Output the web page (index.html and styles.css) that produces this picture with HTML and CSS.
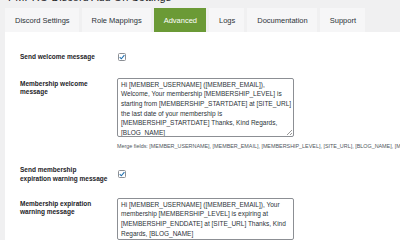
FILE: index.html
```html
<!DOCTYPE html>
<html lang="en">
<head>
<meta charset="utf-8">
<title>Advanced settings</title>
<link rel="stylesheet" href="styles.css">
</head>
<body>
<div class="wrap">
  <h1 class="title">PMPRO Discord Add On Settings</h1>
  <nav class="tabs">
    <span class="tab">Discord Settings</span>
    <span class="tab">Role Mappings</span>
    <span class="tab active">Advanced</span>
    <span class="tab">Logs</span>
    <span class="tab">Documentation</span>
    <span class="tab">Support</span>
  </nav>
  <div class="panel">
    <div class="row row-check">
      <div class="label">Send welcome message</div>
      <div class="field">
        <span class="checkbox"><svg viewBox="0 0 8 8" width="8" height="8"><path d="M1.7 4.2 L3.3 5.8 L6.4 2.1" fill="none" stroke="#2271b1" stroke-width="1.1"/></svg></span>
      </div>
    </div>
    <div class="row row-text">
      <div class="label">Membership welcome<br>message</div>
      <div class="field">
        <div class="textarea tall">
          <span class="line">Hi [MEMBER_USERNAME] ([MEMBER_EMAIL]),</span>
          <span class="line">Welcome, Your membership [MEMBERSHIP_LEVEL] is</span>
          <span class="line">starting from [MEMBERSHIP_STARTDATE] at [SITE_URL]</span>
          <span class="line">the last date of your membership is</span>
          <span class="line">[MEMBERSHIP_STARTDATE] Thanks, Kind Regards,</span>
          <span class="line">[BLOG_NAME]</span>
          <span class="grip"></span>
        </div>
        <p class="merge">Merge fields: [MEMBER_USERNAME], [MEMBER_EMAIL], [MEMBERSHIP_LEVEL], [SITE_URL], [BLOG_NAME], [MEMBERSHIP_STARTDATE], [MEMBERSHIP_ENDDATE]</p>
      </div>
    </div>
    <div class="row row-check row-tight">
      <div class="label">Send membership<br>expiration warning message</div>
      <div class="field">
        <span class="checkbox"><svg viewBox="0 0 8 8" width="8" height="8"><path d="M1.7 4.2 L3.3 5.8 L6.4 2.1" fill="none" stroke="#2271b1" stroke-width="1.1"/></svg></span>
      </div>
    </div>
    <div class="row row-text">
      <div class="label">Membership expiration<br>warning message</div>
      <div class="field">
        <div class="textarea">
          <span class="line">Hi [MEMBER_USERNAME] ([MEMBER_EMAIL]), Your</span>
          <span class="line">membership [MEMBERSHIP_LEVEL] is expiring at</span>
          <span class="line">[MEMBERSHIP_ENDDATE] at [SITE_URL] Thanks, Kind</span>
          <span class="line">Regards, [BLOG_NAME]</span>
        </div>
      </div>
    </div>
  </div>
</div>
</body>
</html>
```

FILE: styles.css
```css
* { box-sizing: border-box; }

html, body {
  margin: 0;
  padding: 0;
  background: #f0f0f1;
  font-family: "Liberation Sans", Arial, sans-serif;
  color: #1d2327;
  overflow: hidden;
  width: 400px;
  height: 240px;
}

.wrap {
  padding-left: 5px;
}

.title {
  margin: -9px 0 0 3px;
  height: 12px;
  font-size: 11px;
  line-height: 12px;
  font-weight: 400;
  color: #1d2327;
  white-space: nowrap;
}

.tabs {
  display: flex;
  gap: 3px;
  margin-top: 5px;
  height: 24px;
}

.tab {
  display: flex;
  align-items: center;
  padding: 0 9px 0 10px;
  background: #f6f6f7;
  font-size: 7.5px;
  color: #2c3338;
  white-space: nowrap;
}

.tab.active {
  background: #6b9a36;
  color: #ffffff;
}

.panel {
  background: #ffffff;
  padding-top: 12px;
  height: 220px;
  overflow: hidden;
}

.row {
  display: flex;
}

.label {
  width: 112px;
  flex: none;
  padding: 9px 0 9px 15px;
  font-size: 6.5px;
  line-height: 8.5px;
  font-weight: 700;
  white-space: nowrap;
  color: #1d2327;
}

.row-tight .label {
  padding-bottom: 7.5px;
}

.row-check {
  align-items: center;
}

.row-text .field {
  padding: 7.5px 0;
}

.field {
  display: flex;
  flex-direction: column;
  min-width: 0;
}

.checkbox {
  display: flex;
  width: 8px;
  height: 8px;
  margin-left: 1px;
  border: 0.6px solid #8c8f94;
  border-radius: 1.5px;
  background: #fff;
  align-items: center;
  justify-content: center;
}

.checkbox svg {
  display: block;
  flex: none;
}

.textarea {
  position: relative;
  width: 177px;
  padding: 0.5px 3px;
  border: 0.6px solid #8c8f94;
  border-radius: 2px;
  background: #fff;
  font-size: 6.5px;
  line-height: 9.7px;
  color: #2c3338;
  overflow: hidden;
}

.textarea.tall {
  height: 59px;
}

.line {
  display: block;
  white-space: nowrap;
}

.grip {
  position: absolute;
  right: 1px;
  bottom: 1px;
  width: 5px;
  height: 5px;
  background: linear-gradient(135deg, transparent 45%, #9a9a9a 45%, #9a9a9a 55%, transparent 55%, transparent 75%, #9a9a9a 75%, #9a9a9a 85%, transparent 85%);
}

.merge {
  margin: 5.5px 0 0;
  font-size: 5.4px;
  line-height: 7px;
  color: #50575e;
  white-space: nowrap;
}
```
